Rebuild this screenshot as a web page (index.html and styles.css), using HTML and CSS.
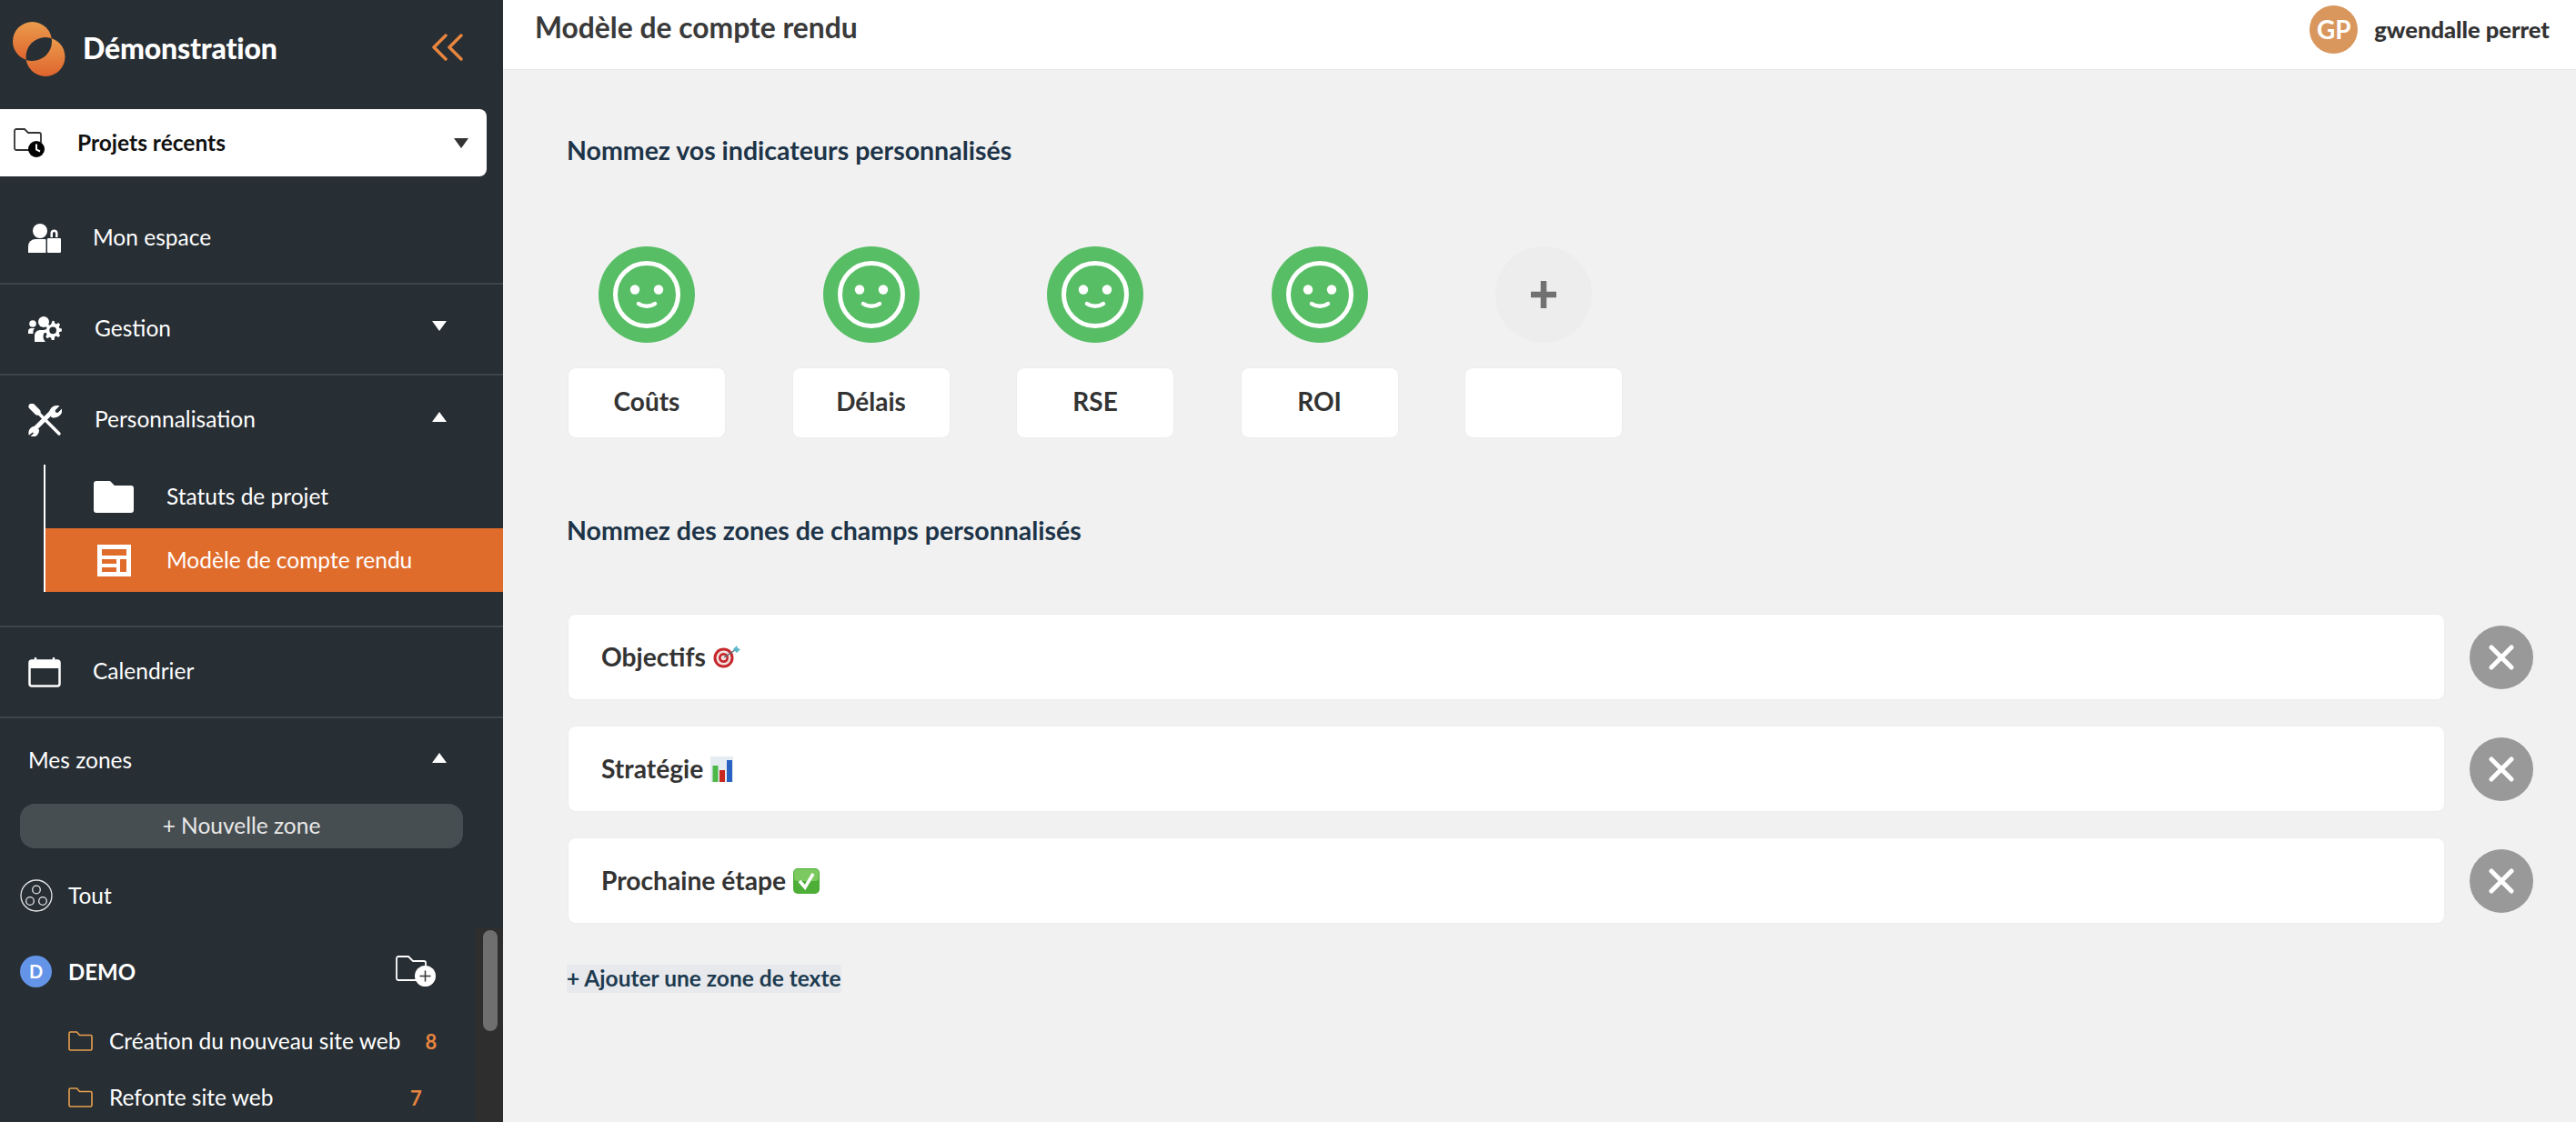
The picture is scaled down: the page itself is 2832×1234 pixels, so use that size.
FILE: index.html
```html
<!DOCTYPE html>
<html lang="fr">
<head>
<meta charset="utf-8">
<title>Modèle de compte rendu</title>
<link rel="stylesheet" href="styles.css">
</head>
<body>
<div class="app">
  <aside class="sidebar">
    <div class="brand">
      <svg class="logo" width="58" height="60" viewBox="0 0 58 60">
        <defs>
          <linearGradient id="lg" x1="0" y1="0" x2="0" y2="1"><stop offset="0" stop-color="#ea9c4c"/><stop offset="1" stop-color="#df642e"/></linearGradient>
          <clipPath id="c2"><circle cx="36" cy="38.5" r="21.5"/></clipPath>
        </defs>
        <circle cx="21.5" cy="21.5" r="21.5" fill="url(#lg)"/>
        <circle cx="36" cy="38.5" r="21.5" fill="url(#lg)"/>
        <circle cx="21.5" cy="21.5" r="21.5" fill="#272e34" clip-path="url(#c2)"/>
      </svg>
      <span class="brand-name">Démonstration</span>
      <svg class="collapse" width="34" height="30" viewBox="0 0 34 30" fill="none" stroke="#e8853f" stroke-width="3.500" stroke-linecap="round" stroke-linejoin="round"><path d="M15 2 2 15l13 13M32 2 19 15l13 13"/></svg>
    </div>

    <div class="recent">
      <svg class="recent-icon" width="34" height="32" viewBox="0 0 34 32"><path d="M20 24H3a2 2 0 0 1-2-2V3a2 2 0 0 1 2-2h9l4 4h12a2 2 0 0 1 2 2v9" fill="none" stroke="#333" stroke-width="1.800"/><circle cx="25" cy="23" r="9" fill="#000"/><path d="M25 17.500v6l4 2" fill="none" stroke="#fff" stroke-width="2"/></svg>
      <span class="recent-label">Projets récents</span>
      <span class="caret caret-down caret-dark"></span>
    </div>

    <div class="section section-first">
      <div class="nav-row">
        <svg class="nav-icon" width="36" height="32" viewBox="0 0 36 32" fill="#fff"><circle cx="13" cy="8" r="8"/><path d="M0 32v-7a8 8 0 0 1 8-8h10a8 8 0 0 1 1.500.2V32z"/><path d="M22 16h13a1 1 0 0 1 1 1v14a1 1 0 0 1-1 1H22a1 1 0 0 1-1-1V17a1 1 0 0 1 1-1zM24.500 15v-4.500a4 4 0 0 1 8 0V15h-2.500v-4.500a1.500 1.500 0 0 0-3 0V15z"/></svg>
        <span class="nav-label">Mon espace</span>
      </div>
    </div>

    <div class="section">
      <div class="nav-row">
        <svg class="nav-icon icon-wide" width="37" height="28" viewBox="0 0 37 28" fill="#fff"><circle cx="17" cy="6" r="6"/><circle cx="5" cy="8" r="3.800"/><path d="M0 19v-2.500A3.500 3.500 0 0 1 3.500 13H7a7 7 0 0 0-1.500 6zM7 28v-7a6 6 0 0 1 6-6h8a8 8 0 0 0-2 13z"/><path fill-rule="evenodd" d="M27.500 10l2 .3.600 2.700 1.800.8 2.300-1.400 2 2-1.400 2.300.7 1.800 2.500.6v3l-2.500.6-.7 1.800 1.400 2.300-2 2-2.300-1.400-1.800.8L29.500 32h-3l-.6-2.500-1.800-.8-2.300 1.400-2-2 1.400-2.300-.7-1.800-2.500-.6v-3l2.500-.6.700-1.800-1.400-2.300 2-2 2.300 1.400 1.800-.8zM28 17a4 4 0 1 0 0 8 4 4 0 0 0 0-8z" transform="translate(0 -5) scale(.97)"/></svg>
        <span class="nav-label label-wide">Gestion</span>
        <span class="caret caret-down"></span>
      </div>
    </div>

    <div class="section section-open">
      <div class="nav-row nav-row-open">
        <svg class="nav-icon icon-wide" width="37" height="36" viewBox="0 0 37 36" fill="none" stroke="#fff" stroke-linecap="round"><path d="M4 3l6 6" stroke-width="7"/><path d="M10 9l24 24" stroke-width="3.500"/><path d="M7 28 25 10" stroke-width="5"/><path d="M24 11a7.500 7.500 0 0 1 8.500-8l-4 4 1 3.500L33 11l3.500-3.500A8 8 0 0 1 26 14" stroke-width="2" fill="#fff"/><path d="M9 26a6 6 0 0 0-7.500 7l3-2.500 2 .5.500 2L4.500 35.500A6 6 0 0 0 11 29" stroke-width="2" fill="#fff"/></svg>
        <span class="nav-label label-wide">Personnalisation</span>
        <span class="caret caret-up"></span>
      </div>
      <div class="subnav">
        <div class="sub-row">
          <span class="sub-icon"><svg width="44" height="35" viewBox="0 0 44 35" fill="#fff"><path d="M3 0h15l5 5h18a3 3 0 0 1 3 3v24a3 3 0 0 1-3 3H3a3 3 0 0 1-3-3V3a3 3 0 0 1 3-3z"/></svg></span>
          <span class="sub-label">Statuts de projet</span>
        </div>
        <div class="sub-row sub-row-active">
          <span class="sub-icon"><svg width="37" height="35" viewBox="0 0 37 35" fill="#fff"><path fill-rule="evenodd" d="M0 0h37v35H0zM5 5v7h27V5zM5 16v5h16v-5zM25 16v14h7V16zM5 25v5h16v-5z"/></svg></span>
          <span class="sub-label">Modèle de compte rendu</span>
        </div>
      </div>
    </div>

    <div class="section">
      <div class="nav-row">
        <svg class="nav-icon" width="36" height="33" viewBox="0 0 36 33" fill="none"><rect x="1.500" y="3.500" width="33" height="28" rx="2.500" stroke="#fff" stroke-width="2.500"/><path d="M1 4h34v8H1z" fill="#fff"/><path d="M8 1v4M28 1v4" stroke="#fff" stroke-width="2.500" stroke-linecap="round"/></svg>
        <span class="nav-label">Calendrier</span>
      </div>
    </div>

    <div class="zones-head">
      <span class="nav-label">Mes zones</span>
      <span class="caret caret-up"></span>
    </div>
    <button class="new-zone">+ Nouvelle zone</button>

    <div class="zone-all">
      <svg width="36" height="36" viewBox="0 0 36 36" fill="none" stroke="#e6e6e6" stroke-width="1.300"><circle cx="18" cy="18" r="17"/><circle cx="18" cy="11.500" r="4.300"/><circle cx="11" cy="24" r="4.300"/><circle cx="25" cy="24" r="4.300"/></svg>
      <span class="zone-label">Tout</span>
    </div>

    <div class="zone-demo">
      <span class="zone-badge">D</span>
      <span class="zone-title">DEMO</span>
      <svg class="zone-add" width="44" height="34" viewBox="0 0 44 34" fill="none"><path d="M26 27H3a2 2 0 0 1-2-2V3a2 2 0 0 1 2-2h11l5 5h12a2 2 0 0 1 2 2v6" stroke="#fff" stroke-width="1.800"/><circle cx="32.500" cy="22.500" r="11.500" fill="#fff"/><path d="M32.500 16.500v12M26.500 22.500h12" stroke="#333" stroke-width="1.500"/></svg>
    </div>

    <div class="project">
      <svg class="project-icon" width="27" height="22" viewBox="0 0 27 22" fill="none" stroke="#e9a04e" stroke-width="1.600"><path d="M2.500 1h7l3 3.500h12a1.500 1.500 0 0 1 1.500 1.500v13.500a1.500 1.500 0 0 1-1.500 1.500h-22A1.500 1.500 0 0 1 1 19.500v-17A1.500 1.500 0 0 1 2.500 1z"/></svg>
      <span class="project-name">Création du nouveau site web</span>
      <span class="project-count">8</span>
    </div>
    <div class="project">
      <svg class="project-icon" width="27" height="22" viewBox="0 0 27 22" fill="none" stroke="#e9a04e" stroke-width="1.600"><path d="M2.500 1h7l3 3.500h12a1.500 1.500 0 0 1 1.500 1.500v13.500a1.500 1.500 0 0 1-1.500 1.500h-22A1.500 1.500 0 0 1 1 19.500v-17A1.500 1.500 0 0 1 2.500 1z"/></svg>
      <span class="project-name project-name-fixed">Refonte site web</span>
      <span class="project-count">7</span>
    </div>

    <div class="scroll-track"><div class="scroll-thumb"></div></div>
  </aside>

  <main class="main">
    <header class="topbar">
      <h1 class="page-title">Modèle de compte rendu</h1>
      <div class="user">
        <span class="avatar">GP</span>
        <span class="user-name">gwendalle perret</span>
      </div>
    </header>

    <div class="content">
      <h2 class="heading">Nommez vos indicateurs personnalisés</h2>
      <div class="indicators">
        <div class="indicator">
          <svg class="smiley" width="106" height="106" viewBox="0 0 106 106"><circle cx="53" cy="53" r="53" fill="#58be66"/><circle cx="53" cy="53" r="34.500" fill="none" stroke="#fff" stroke-width="5"/><circle cx="40" cy="47.500" r="5.200" fill="#fff"/><circle cx="66" cy="47.500" r="5.200" fill="#fff"/><path d="M44 63c5 3.500 13 3.500 18 0" fill="none" stroke="#fff" stroke-width="4.500" stroke-linecap="round"/></svg>
          <div class="indicator-name">Coûts</div>
        </div>
        <div class="indicator">
          <svg class="smiley" width="106" height="106" viewBox="0 0 106 106"><circle cx="53" cy="53" r="53" fill="#58be66"/><circle cx="53" cy="53" r="34.500" fill="none" stroke="#fff" stroke-width="5"/><circle cx="40" cy="47.500" r="5.200" fill="#fff"/><circle cx="66" cy="47.500" r="5.200" fill="#fff"/><path d="M44 63c5 3.500 13 3.500 18 0" fill="none" stroke="#fff" stroke-width="4.500" stroke-linecap="round"/></svg>
          <div class="indicator-name">Délais</div>
        </div>
        <div class="indicator">
          <svg class="smiley" width="106" height="106" viewBox="0 0 106 106"><circle cx="53" cy="53" r="53" fill="#58be66"/><circle cx="53" cy="53" r="34.500" fill="none" stroke="#fff" stroke-width="5"/><circle cx="40" cy="47.500" r="5.200" fill="#fff"/><circle cx="66" cy="47.500" r="5.200" fill="#fff"/><path d="M44 63c5 3.500 13 3.500 18 0" fill="none" stroke="#fff" stroke-width="4.500" stroke-linecap="round"/></svg>
          <div class="indicator-name">RSE</div>
        </div>
        <div class="indicator">
          <svg class="smiley" width="106" height="106" viewBox="0 0 106 106"><circle cx="53" cy="53" r="53" fill="#58be66"/><circle cx="53" cy="53" r="34.500" fill="none" stroke="#fff" stroke-width="5"/><circle cx="40" cy="47.500" r="5.200" fill="#fff"/><circle cx="66" cy="47.500" r="5.200" fill="#fff"/><path d="M44 63c5 3.500 13 3.500 18 0" fill="none" stroke="#fff" stroke-width="4.500" stroke-linecap="round"/></svg>
          <div class="indicator-name">ROI</div>
        </div>
        <div class="indicator">
          <svg class="smiley" width="106" height="106" viewBox="0 0 106 106"><circle cx="53" cy="53" r="53" fill="#ededed"/><path d="M53 38v30M39 53h28" stroke="#717171" stroke-width="6.500"/></svg>
          <div class="indicator-name"></div>
        </div>
      </div>

      <h2 class="heading heading-fields">Nommez des zones de champs personnalisés</h2>
      <div class="fields">
        <div class="field">
          <div class="field-box">
            <span class="field-text">Objectifs</span>
            <svg class="emoji" width="30" height="25" viewBox="0 0 30 25"><circle cx="11.500" cy="13.500" r="11" fill="#c6282d"/><circle cx="11.500" cy="13.500" r="8" fill="#f3e4e0"/><circle cx="11.500" cy="13.500" r="5.500" fill="#c6282d"/><circle cx="11.500" cy="13.500" r="2.800" fill="#f3e4e0"/><path d="M12 13 24 5" stroke="#5b6d75" stroke-width="1.500"/><path d="M22 4l4-4 1 3 3 1-4 4z" fill="#5cb7c9"/></svg>
          </div>
          <span class="remove"><svg width="28" height="28" viewBox="0 0 28 28" fill="none" stroke="#fff" stroke-width="5" stroke-linecap="round"><path d="M3 3l22 22M25 3 3 25"/></svg></span>
        </div>
        <div class="field">
          <div class="field-box">
            <span class="field-text">Stratégie</span>
            <svg class="emoji emoji-chart" width="25" height="28" viewBox="0 0 25 28"><rect width="25" height="28" fill="#e5edf2"/><rect x="2.500" y="10" width="6" height="18" fill="#4cb848"/><rect x="10" y="15" width="6" height="13" fill="#c8281e"/><rect x="18" y="4" width="6" height="24" fill="#2a62c4"/></svg>
          </div>
          <span class="remove"><svg width="28" height="28" viewBox="0 0 28 28" fill="none" stroke="#fff" stroke-width="5" stroke-linecap="round"><path d="M3 3l22 22M25 3 3 25"/></svg></span>
        </div>
        <div class="field">
          <div class="field-box">
            <span class="field-text">Prochaine étape</span>
            <svg class="emoji emoji-check" width="29" height="28" viewBox="0 0 29 28"><rect width="29" height="28" rx="5" fill="#4dae38"/><rect x="1" y="1" width="27" height="13" rx="4" fill="#7cc95f"/><path d="M7 14l6 7 9-15" fill="none" stroke="#fff" stroke-width="3.500"/></svg>
          </div>
          <span class="remove"><svg width="28" height="28" viewBox="0 0 28 28" fill="none" stroke="#fff" stroke-width="5" stroke-linecap="round"><path d="M3 3l22 22M25 3 3 25"/></svg></span>
        </div>
      </div>
      <a class="add-zone">+ Ajouter une zone de texte</a>
    </div>
  </main>
</div>
</body>
</html>
```

FILE: styles.css
```css
* { box-sizing: border-box; }
html, body { margin: 0; height: 100%; overflow: hidden; }
body { font-family: "Lato", "Open Sans", sans-serif; background: #f1f1f1; color: #333; }
.app { display: flex; height: 1234px; }

/* Sidebar */
.sidebar { position: relative; width: 553px; flex: none; background: #272e34; color: #fff; overflow: hidden; }
.brand { display: flex; align-items: center; height: 120px; padding: 0 44px 12px 14px; }
.brand-name { margin-left: 19px; margin-bottom: 3px; font-size: 32px; font-weight: 900; letter-spacing: -.2px; }
.collapse { margin-left: auto; margin-bottom: 4px; }
.recent { display: flex; align-items: center; width: 535px; height: 74px; background: #fff; color: #111; border-radius: 0 8px 8px 0; padding: 0 20px 0 15px; }
.recent-label { margin-left: 36px; margin-bottom: 2px; font-size: 24.500px; font-weight: 700; }
.caret { width: 0; height: 0; border-left: 8.500px solid transparent; border-right: 8.500px solid transparent; margin-left: auto; margin-right: 62px; }
.recent .caret { margin-right: 0; }
.caret-down { border-top: 11px solid #fff; margin-top: -8px; }
.caret-up { border-bottom: 11px solid #fff; margin-top: -8px; }
.caret-dark { border-top-color: #333; margin-top: 0; }
.section { border-bottom: 2px solid #3f4649; height: 100px; display: flex; flex-direction: column; }
.section-first { margin-top: 19px; }
.section-open { height: 277px; }
.nav-row { display: flex; align-items: center; height: 98px; padding-left: 31px; flex: none; }
.nav-icon { margin-right: 35px; flex: none; }
.icon-wide { margin-right: 36px; }
.nav-label { margin-bottom: 3px; font-size: 24.500px; }
.subnav { margin-left: 48px; border-left: 2px solid #fff; }
.sub-row { display: flex; align-items: center; height: 70px; }
.sub-icon { display: flex; justify-content: center; width: 44px; margin-left: 53px; margin-right: 36px; }
.sub-label { margin-bottom: 2px; font-size: 24.500px; }
.sub-row-active { background: #e06c2c; }
.zones-head { display: flex; align-items: center; height: 94px; padding-left: 31px; }
.new-zone { display: block; width: 487px; height: 49px; margin-left: 22px; padding: 0 0 3px; border: 0; border-radius: 16px; background: #474e52; color: #e8e8e8; font: 24.500px "Lato", sans-serif; }
.zone-all { display: flex; align-items: center; height: 36px; margin-top: 34px; padding-left: 22px; }
.zone-label { margin-left: 17px; margin-bottom: 2px; font-size: 24.500px; }
.zone-demo { display: flex; align-items: center; height: 36px; margin-top: 47px; padding-left: 22px; }
.zone-badge { display: flex; align-items: center; justify-content: center; width: 35px; height: 35px; border-radius: 50%; background: #6394e8; font-size: 20px; font-weight: 700; }
.zone-title { width: 360px; margin-left: 18px; font-size: 24px; font-weight: 700; }
.zone-add { flex: none; }
.project { display: flex; align-items: center; height: 36px; margin-top: 26px; padding-left: 75px; }
.zone-demo + .project { margin-top: 41px; }
.project-name { margin-left: 18px; margin-bottom: 2px; font-size: 24.500px; }
.project-name-fixed { width: 304px; }
.project-count { margin-left: 27px; font-size: 22px; font-weight: 700; color: #e8853f; }
.scroll-track { position: absolute; right: 0; top: 1021px; bottom: 0; width: 30px; background: #2e2e2e; }
.scroll-thumb { width: 16px; height: 111px; margin: 2px 0 0 8px; border-radius: 8px; background: #6f6f6f; }

/* Main */
.main { flex: 1; min-width: 0; }
.topbar { display: flex; align-items: center; height: 77px; background: #fff; border-bottom: 1px solid #e8e8e8; padding: 0 29px 0 35px; }
.page-title { margin: 0 0 16px; font-size: 31.800px; font-weight: 700; color: #3a3a3a; }
.user { display: flex; align-items: center; margin-left: auto; }
.avatar { display: flex; align-items: center; justify-content: center; width: 53px; height: 53px; margin-top: -12px; border-radius: 50%; background: #d9975e; color: #fff; font-size: 28px; font-weight: 700; }
.user-name { margin-left: 18px; margin-top: -12px; font-size: 25.500px; font-weight: 900; color: #333; }
.content { padding: 0 47px 0 70px; }
.heading { margin: 0; padding-top: 71px; height: 194px; font-size: 28.500px; font-weight: 700; color: #1d3448; }
.heading-fields { padding-top: 85px; height: 195px; }
.indicators { display: flex; gap: 74.500px; margin-left: 2px; }
.indicator { display: flex; flex-direction: column; align-items: center; width: 172px; }
.indicator-name { display: flex; align-items: center; justify-content: center; width: 172px; height: 76px; margin-top: 28px; padding-bottom: 4px; border-radius: 8px; background: #fff; box-shadow: 0 0 2px #e6e6e6; font-size: 28px; font-weight: 700; }
.fields { display: flex; flex-direction: column; gap: 30px; margin-left: 2px; }
.field { display: flex; align-items: center; }
.field-box { display: flex; align-items: center; flex: 1; height: 93px; padding-left: 36px; border-radius: 8px; background: #fff; box-shadow: 0 0 2px #e6e6e6; font-size: 28.200px; font-weight: 700; color: #333; }
.field-text { margin-bottom: 2px; }
.emoji { margin-left: 8px; }
.remove { display: flex; align-items: center; justify-content: center; width: 70px; height: 70px; margin-left: 28px; border-radius: 50%; background: #999; flex: none; }
.add-zone { display: inline-block; margin-top: 46px; height: 31px; line-height: 29px; background: #e8e9ed; font-size: 24.500px; font-weight: 700; color: #1d3b50; }
```
